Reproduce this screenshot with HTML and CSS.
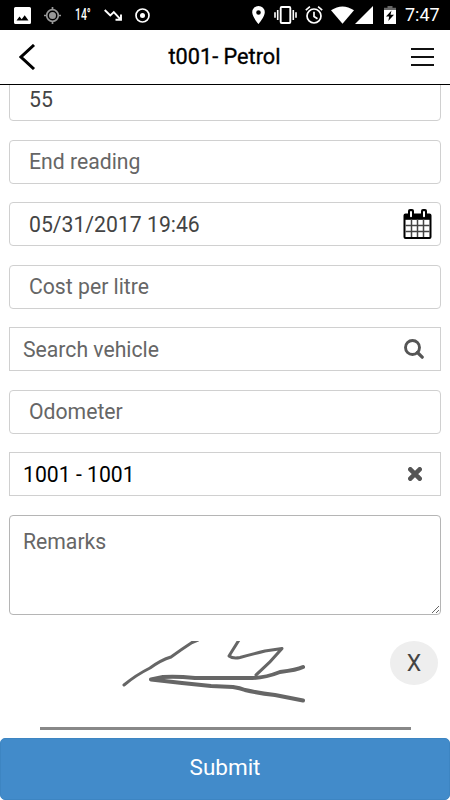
FILE: index.html
```html
<!DOCTYPE html>
<html lang="en">
<head>
    <meta charset="UTF-8">
    <meta name="viewport" content="width=device-width, initial-scale=1.0">
    <title>t001- Petrol</title>
    <link rel="stylesheet" href="styles.css">
</head>
<body>
<div class="status-bar">
    <div class="status-left">
        <svg width="17" height="17" viewBox="0 0 17 17"><path fill="#fff" fill-rule="evenodd" d="M1.5 0h14A1.5 1.5 0 0 1 17 1.500v14a1.500 1.500 0 0 1-1.500 1.500h-14A1.500 1.500 0 0 1 0 15.500v-14A1.500 1.500 0 0 1 1.500 0zM2.500 13.500h12L10.700 8.200l-3 4-2.200-2.700z"/></svg>
        <svg width="17" height="17" viewBox="0 0 17 17" fill="none" stroke="#999" stroke-width="1.700"><circle cx="8.500" cy="8.500" r="5.800"/><circle cx="8.500" cy="8.500" r="3.500" fill="#999" stroke="none"/><path d="M8.500 0v3M8.500 14v3M0 8.500h3M14 8.500h3"/></svg>
        <span class="temp">14°</span>
        <svg width="18" height="12" viewBox="0 0 18 12" fill="none" stroke="#fff" stroke-width="1.900"><path d="M.7 1l5.600 5.500 3.500-3.400 6.700 7.200M11.500 10.800h5.500V5.400"/></svg>
        <svg width="15" height="15" viewBox="0 0 15 15"><circle cx="7.500" cy="7.500" r="6.500" fill="none" stroke="#fff" stroke-width="1.700"/><circle cx="7.500" cy="7.500" r="2.500" fill="#fff"/></svg>
    </div>
    <div class="status-right">
        <svg width="13" height="18" viewBox="0 0 13 18"><path fill="#fff" fill-rule="evenodd" d="M6.500 0A6.300 6.300 0 0 0 .2 6.300C.2 11 6.500 18 6.500 18s6.300-7 6.300-11.700A6.300 6.300 0 0 0 6.500 0zm0 4.200a2.300 2.300 0 1 1 0 4.600 2.300 2.300 0 0 1 0-4.600z"/></svg>
        <svg class="vibrate" width="23" height="18" viewBox="0 0 23 18" fill="none" stroke="#fff" stroke-width="1.900"><rect x="6.700" y="1" width="9.600" height="16" rx="1"/><path d="M3.700 4v10M19.300 4v10M1 6.200v5.600M22 6.200v5.600" stroke-width="1.600"/></svg>
        <svg class="alarm" width="18" height="18" viewBox="0 0 18 18" fill="none" stroke="#fff" stroke-width="1.700"><circle cx="9" cy="10" r="7"/><path d="M.8 4.100L4.900.7M17.200 4.100L13.100.7M9 5.800v4.700l3.500 2.200"/></svg>
        <svg class="wifi" width="23" height="18" viewBox="0 0 24 18"><path fill="#fff" d="M0 4.100Q12-4 24 4.100L12 18z"/></svg>
        <svg class="signal" width="18" height="18" viewBox="0 0 18 18"><path fill="#fff" d="M18 0v18H0z"/></svg>
        <svg class="battery" width="12" height="18" viewBox="0 0 12 18"><path fill="#666" d="M3.500 0h5v1.700H12V4H0V1.700h3.500z"/><path fill="#fff" d="M0 4h12v14H0z"/><path fill="#000" d="M7.500 4.500L2 10.500h3.200L4.300 15 10 8.700H6.500z"/></svg>
        <span class="clock">7:47</span>
    </div>
</div>
<div class="header">
    <svg width="17" height="26" viewBox="0 0 17 26" fill="none" stroke="#000" stroke-width="3"><path d="M15 1L2 13 15 25"/></svg>
    <div class="title">t001- Petrol</div>
    <div class="menu">
        <span></span>
        <span></span>
        <span></span>
    </div>
</div>
<div class="content">
    <form class="form">
        <div class="field"><input type="text" value="55"></div>
        <div class="field"><input type="text" placeholder="End reading"></div>
        <div class="field">
            <input type="text" value="05/31/2017 19:46">
            <svg class="calendar" width="29" height="30" viewBox="0 0 28 30">
                <path d="M2 4.500h24a2 2 0 0 1 2 2V28a2 2 0 0 1-2 2H2a2 2 0 0 1-2-2V6.500a2 2 0 0 1 2-2z"/>
                <path fill="#fff" d="M2 10.800h24V28H2z"/>
                <path stroke="#444" stroke-width="1.500" d="M8 10v18M14 10v18M20 10v18M2 16.400h24M2 22.400h24"/>
                <rect x="4.500" y="0" width="6" height="9.500" rx="2"/><rect x="17.500" y="0" width="6" height="9.500" rx="2"/>
                <path stroke="#fff" stroke-width="2" stroke-linecap="round" d="M7.500 3v4.200M20.500 3v4.200"/>
            </svg>
        </div>
        <div class="field"><input type="text" placeholder="Cost per litre"></div>
        <div class="field search">
            <input type="text" placeholder="Search vehicle">
            <svg class="glass" width="20" height="20" viewBox="0 0 20 20" fill="none" stroke="#555" stroke-width="2.900"><circle cx="8.500" cy="8.500" r="7"/><path d="M13.500 13.500l4.700 4.700" stroke-width="3.200" stroke-linecap="round"/></svg>
        </div>
        <div class="field"><input type="text" placeholder="Odometer"></div>
        <div class="field search selected">
            <input type="text" value="1001 - 1001">
            <svg class="clear" width="14" height="14" viewBox="0 0 14 14" stroke="#555" stroke-width="4.600" stroke-linecap="round"><path d="M2.300 2.300l9.400 9.400M11.700 2.300l-9.400 9.400"/></svg>
        </div>
        <textarea class="remarks" placeholder="Remarks"></textarea>
    </form>
    <div class="signature">
        <svg class="strokes" width="370" height="86" viewBox="40 641 370 86" fill="none" stroke="#666" stroke-width="3" stroke-linecap="round" stroke-linejoin="round">
            <path d="M124 685Q136 675 150 668Q161 660 171 657Q182 649 192 642.500L198 640"/>
            <path d="M239 640L229 656Q233 659 240 657.500Q253 654 265 651L282 648.500Q270 663 256 675"/>
            <path d="M303 667Q297 670 280 672Q265 678 252 678L195 678Q176 676 163 677L151 679.500L182 683L211 686L233 687Q240 688 245 690Q258 693 275 695L303 700.500" stroke-width="4"/>
        </svg>
        <button type="button" class="reset">X</button>
    </div>
</div>
<button type="button" class="submit">Submit</button>
</body>
</html>
```

FILE: styles.css
```css
* {
    box-sizing: border-box;
}
body {
    margin: 0;
    height: 800px;
    display: flex;
    flex-direction: column;
    overflow: hidden;
    background-color: #fff;
    font-family: Roboto, sans-serif;
    font-size: 21.2px;
}
svg {
    display: block;
    flex-shrink: 0;
}
.status-bar {
    height: 30px;
    flex-shrink: 0;
    display: flex;
    justify-content: space-between;
    align-items: center;
    padding: 0 10px 0 14px;
    background-color: #000;
    color: #fff;
}
.status-left, .status-right {
    display: flex;
    align-items: center;
}
.status-left {
    gap: 13.300px;
}
.temp {
    width: 16px;
    font-size: 16px;
    font-weight: 500;
    line-height: 30px;
    white-space: nowrap;
    transform: scaleX(0.65);
    transform-origin: left;
}
.vibrate {
    margin-left: 9px;
}
.alarm {
    margin-left: 8px;
}
.wifi {
    margin-left: 8px;
}
.signal {
    margin-left: 1px;
}
.battery {
    margin-left: 11px;
}
.clock {
    width: 35px;
    margin-left: 9px;
    font-size: 18px;
    line-height: 32px;
}
.header {
    height: 55px;
    flex-shrink: 0;
    display: flex;
    justify-content: space-between;
    align-items: center;
    padding: 0 16px 0 19px;
    border-bottom: 1px solid #000;
}
.title {
    padding: 0 0 2px 2px;
    font-size: 21.7px;
    -webkit-text-stroke: 0.35px #000;
    color: #000;
}
.menu {
    width: 23px;
    display: flex;
    flex-direction: column;
    gap: 6px;
}
.menu span {
    height: 2px;
    background-color: #111;
}
.content {
    flex: 1;
    min-height: 0;
    overflow: hidden;
}
.form {
    display: flex;
    flex-direction: column;
    gap: 18.5px;
    margin-top: -7.700px;
    padding: 0 9px;
}
.field {
    height: 44px;
    flex-shrink: 0;
    display: flex;
    align-items: center;
    padding: 0 0 0.5px 19px;
    border: 1px solid #d0d0d0;
    border-radius: 4px;
}
.field input {
    flex: 1;
    min-width: 0;
    padding: 0;
    border: none;
    outline: none;
    background: none;
    font: inherit;
    color: #444;
}
.field input::placeholder, .remarks::placeholder {
    color: #666;
    opacity: 1;
}
.search {
    padding-left: 13px;
    border-radius: 0;
}
.selected input {
    color: #000;
}
.calendar {
    margin-right: 8px;
}
.glass {
    margin-right: 16px;
}
.clear {
    margin-right: 18px;
}
.remarks {
    display: block;
    height: 100px;
    padding: 13px;
    border: 1px solid #b5b5b5;
    border-radius: 4px;
    outline: none;
    resize: vertical;
    font: inherit;
}
.signature {
    height: 89px;
    display: flex;
    justify-content: space-between;
    margin: 26.200px 12px 0 40px;
    position: relative;
}
/* line to sign on */
.signature::after {
    content: "";
    position: absolute;
    left: 0;
    bottom: 0;
    width: 371px;
    height: 3px;
    background-color: #888;
}
.strokes {
    margin-right: -22px;
}
.reset {
    width: 48px;
    height: 44px;
    padding: 0;
    flex-shrink: 0;
    border: none;
    border-radius: 50%;
    background-color: #eee;
    color: #444;
    font: inherit;
    font-size: 23px;
}
.submit {
    height: 62px;
    flex-shrink: 0;
    padding: 0 0 4px;
    border: 1px solid #3d85c2;
    border-radius: 5px;
    background-color: #428bca;
    color: #fff;
    font: inherit;
    font-size: 22.5px;
}
```
